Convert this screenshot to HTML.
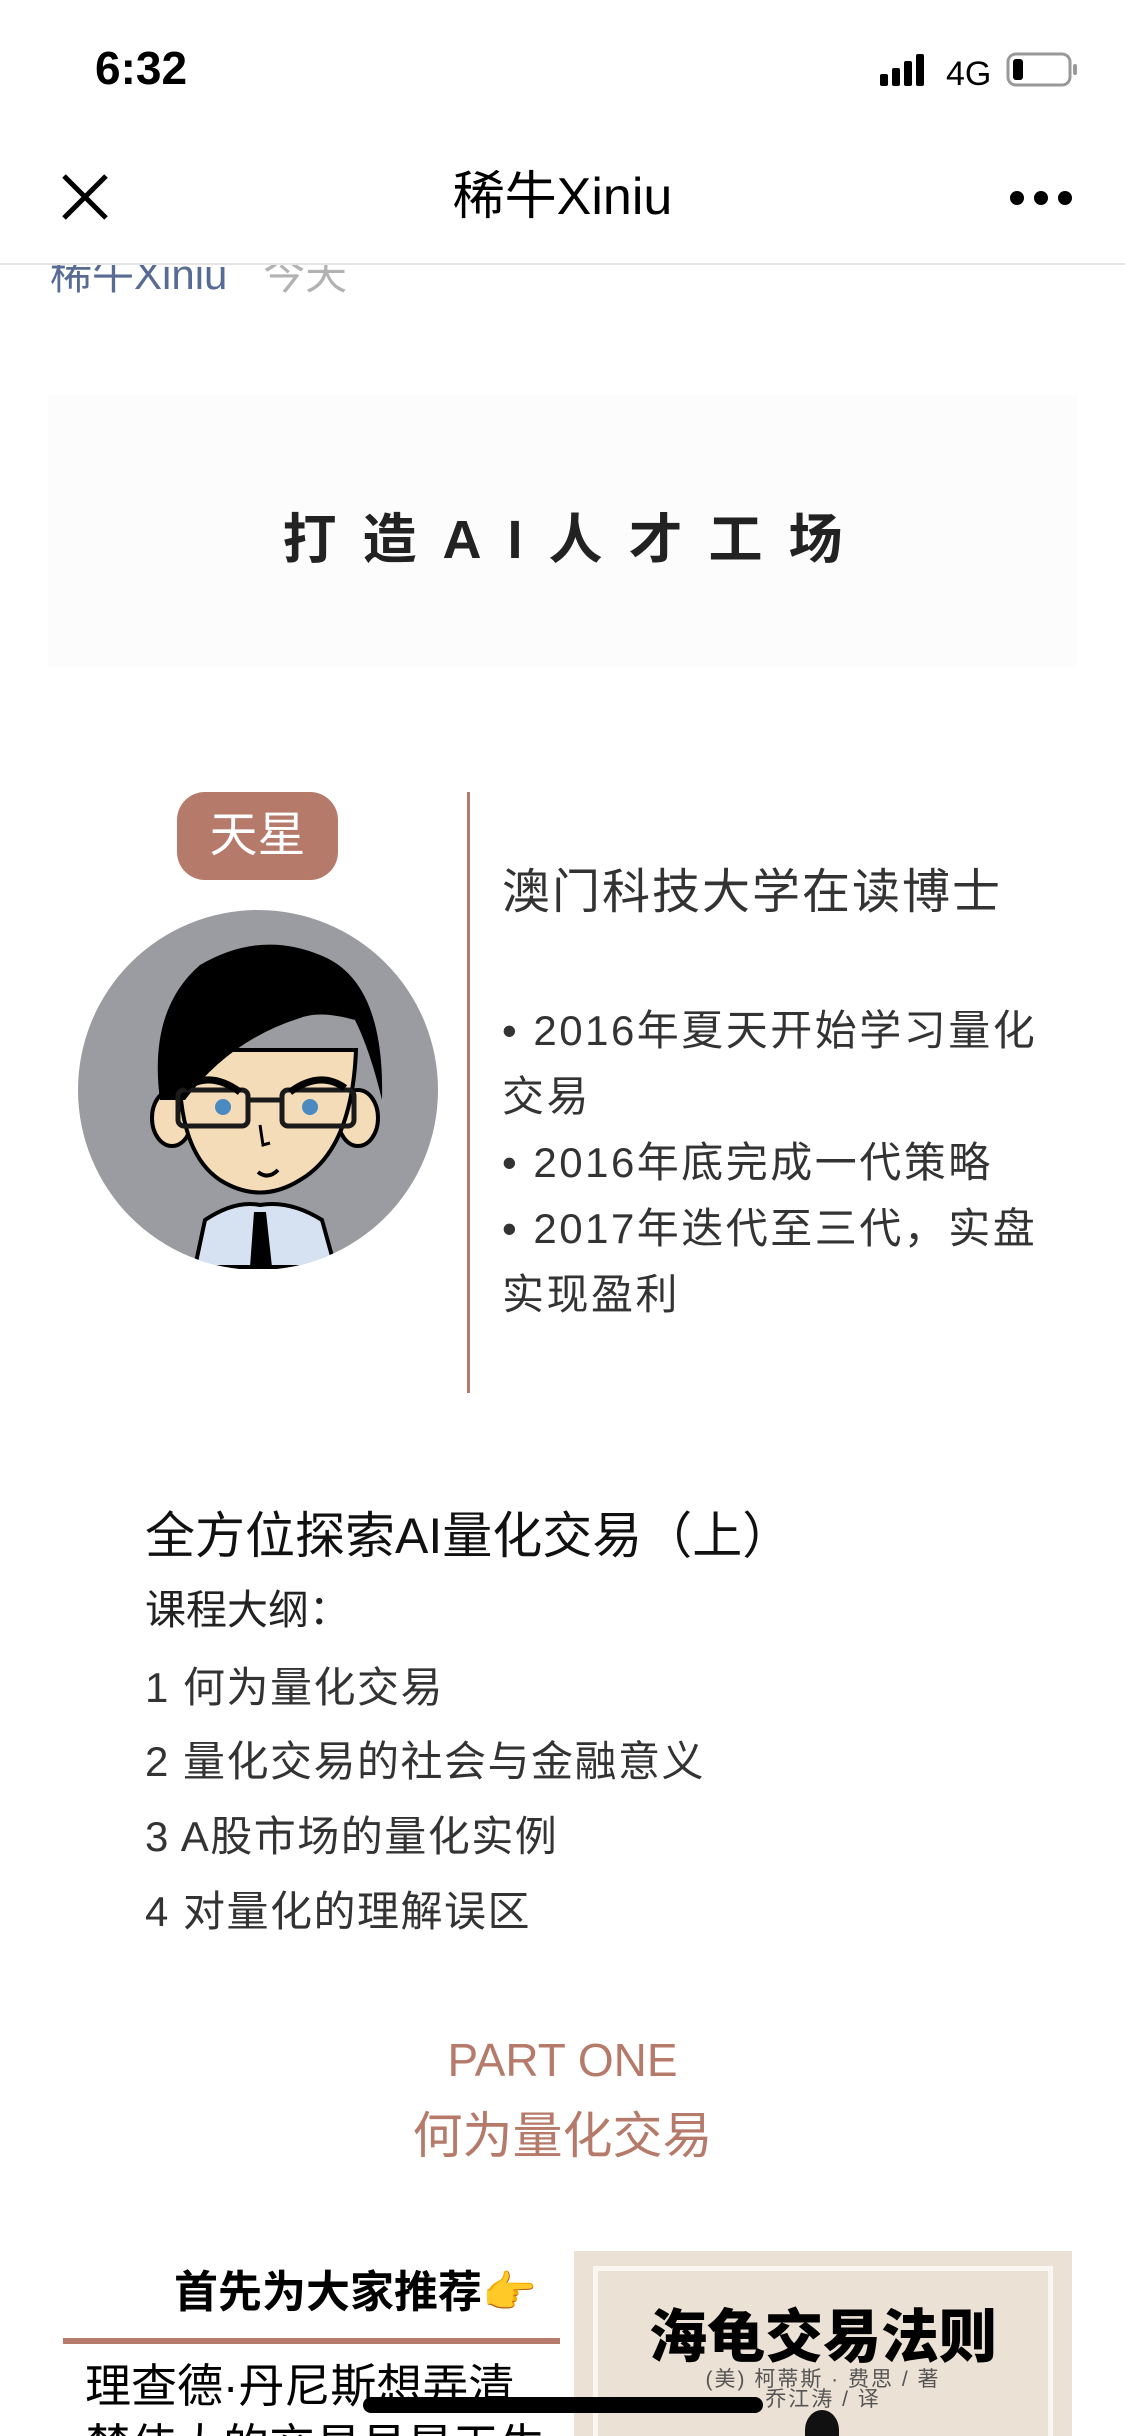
<!DOCTYPE html>
<html><head><meta charset="utf-8"><style>
*{margin:0;padding:0;box-sizing:border-box}
html,body{width:1125px;height:2436px;overflow:hidden;background:#fff}
#w{width:1125px;height:2436px;position:relative;overflow:hidden;font-family:"Liberation Sans","Noto Sans CJK SC",sans-serif;color:#333;background:#fff}
.a{position:absolute;white-space:nowrap}
</style></head><body><div id="w">
<div class="a" style="left:50px;top:250px;font-size:42px;line-height:50px;color:#576b95">稀牛Xiniu <span style="color:#b2b2b2;margin-left:24px">今天</span></div>
<div class="a" style="left:0;top:0;width:1125px;height:265px;background:#fff;border-bottom:2px solid #e5e5e5"></div>
<div class="a" style="left:95px;top:40px;font-size:46px;line-height:56px;font-weight:600;color:#000">6:32</div>
<svg class="a" style="left:880px;top:52px" width="200" height="36" viewBox="0 0 200 36">
<rect x="0" y="22" width="8" height="12" rx="2" fill="#000"/><rect x="12" y="16" width="8" height="18" rx="2" fill="#000"/><rect x="24" y="9" width="8" height="25" rx="2" fill="#000"/><rect x="36" y="2" width="8" height="32" rx="2" fill="#000"/>
<text x="66" y="33" font-size="34" font-family="Liberation Sans" fill="#000">4G</text>
<rect x="128" y="2" width="62" height="31" rx="8" fill="none" stroke="#999" stroke-width="3"/><rect x="133" y="7" width="10" height="21" rx="3" fill="#000"/><rect x="193" y="12" width="4" height="11" rx="2" fill="#999"/>
</svg>
<svg class="a" style="left:60px;top:172px" width="50" height="50" viewBox="0 0 50 50"><path d="M4 4L46 46M46 4L4 46" stroke="#000" stroke-width="5"/></svg>
<div class="a" style="left:0;width:1125px;top:165px;text-align:center;font-size:52px;line-height:64px;color:#000">稀牛Xiniu</div>
<svg class="a" style="left:1008px;top:188px" width="66" height="20"><circle cx="9" cy="10" r="7" fill="#000"/><circle cx="33" cy="10" r="7" fill="#000"/><circle cx="57" cy="10" r="7" fill="#000"/></svg>
<div class="a" style="left:48px;top:395px;width:1029px;height:272px;background:#fdfcfd"></div>
<div class="a" style="left:0;width:1125px;top:510px;text-align:center;font-size:54px;line-height:60px;font-weight:bold;color:#222;letter-spacing:26px;padding-left:26px">打造AI人才工场</div>
<div class="a" style="left:177px;top:792px;width:161px;height:88px;background:#b57a69;border-radius:28px;color:#fff;font-size:48px;line-height:88px;text-align:center">天星</div>
<svg class="a" style="left:60px;top:900px" width="400" height="380" viewBox="0 0 400 380">
<defs><clipPath id="c"><circle cx="198" cy="190" r="180"/></clipPath></defs>
<g clip-path="url(#c)">
<rect x="0" y="0" width="400" height="367" fill="#9b9ca1"/>
<path d="M135 367L145 320Q175 300 200 305Q230 300 262 320L275 367Z" fill="#d6e2f2" stroke="#000" stroke-width="4"/>
<path d="M194 312L206 312L212 367L190 367Z" fill="#000"/>
<ellipse cx="112" cy="218" rx="20" ry="28" fill="#f5dcb8" stroke="#000" stroke-width="4"/>
<ellipse cx="298" cy="218" rx="20" ry="28" fill="#f5dcb8" stroke="#000" stroke-width="4"/>
<path d="M120 150Q115 250 160 280Q200 305 240 280Q292 250 296 150Z" fill="#f5dcb8" stroke="#000" stroke-width="4"/>
<path d="M100 200Q88 110 140 65Q200 30 260 55Q325 80 322 200Q310 150 295 120Q260 110 240 118Q170 140 125 200Z" fill="#000"/>
<rect x="118" y="190" width="70" height="36" rx="6" fill="none" stroke="#1a1a1a" stroke-width="5"/>
<rect x="222" y="190" width="72" height="36" rx="6" fill="none" stroke="#1a1a1a" stroke-width="5"/>
<path d="M188 200L222 200" stroke="#1a1a1a" stroke-width="5"/>
<path d="M125 188Q150 170 180 192M230 192Q260 170 285 188" stroke="#000" stroke-width="7" fill="none"/>
<circle cx="163" cy="207" r="8" fill="#4a8ac0"/><circle cx="250" cy="207" r="8" fill="#4a8ac0"/>
<path d="M200 225L203 245L210 243" stroke="#000" stroke-width="3" fill="none"/>
<path d="M198 272Q208 280 218 270" stroke="#000" stroke-width="4" fill="none"/>
</g></svg>
<div class="a" style="left:467px;top:792px;width:3px;height:601px;background:#b57a69"></div>
<div class="a" style="left:502px;top:866px;font-size:48px;line-height:54px;letter-spacing:2px">澳门科技大学在读博士</div>
<div class="a" style="left:502px;top:998px;font-size:42px;line-height:66px;letter-spacing:2.5px">• 2016年夏天开始学习量化<br>交易<br>• 2016年底完成一代策略<br>• 2017年迭代至三代，实盘<br>实现盈利</div>
<div class="a" style="left:145px;top:1508px;font-size:50px;line-height:56px;color:#111">全方位探索AI量化交易（上）</div>
<div class="a" style="left:145px;top:1586px;font-size:41px;line-height:48px;color:#222">课程大纲：</div>
<div class="a" style="left:145px;top:1664px;font-size:42px;line-height:48px;letter-spacing:1.5px">1 何为量化交易</div>
<div class="a" style="left:145px;top:1738px;font-size:42px;line-height:48px;letter-spacing:1.5px">2 量化交易的社会与金融意义</div>
<div class="a" style="left:145px;top:1813px;font-size:42px;line-height:48px;letter-spacing:1.5px">3 A股市场的量化实例</div>
<div class="a" style="left:145px;top:1888px;font-size:42px;line-height:48px;letter-spacing:1.5px">4 对量化的理解误区</div>
<div class="a" style="left:0;width:1125px;text-align:center;top:2032px;font-size:46px;line-height:56px;color:#b57a69">PART ONE</div>
<div class="a" style="left:0;width:1125px;text-align:center;top:2106px;font-size:50px;line-height:60px;color:#b57a69">何为量化交易</div>
<div class="a" style="left:174px;top:2268px;font-size:44px;line-height:50px;font-weight:bold;color:#000">首先为大家推荐👉</div>
<div class="a" style="left:63px;top:2338px;width:497px;height:6px;background:#b57a69"></div>
<div class="a" style="left:85px;top:2358px;font-size:46px;line-height:56px;color:#000">理查德·丹尼斯想弄清</div>
<div class="a" style="left:85px;top:2418px;font-size:46px;line-height:56px;color:#000">楚伟大的交易员是天生</div>
<div class="a" style="left:574px;top:2251px;width:498px;height:200px;background:#ece1d5"></div>
<div class="a" style="left:593px;top:2266px;width:460px;height:200px;border:5px solid #faf7f3;border-bottom:none"></div>
<div class="a" style="left:574px;width:498px;text-align:center;top:2306px;font-size:58px;line-height:64px;font-weight:900;color:#000">海龟交易法则</div>
<div class="a" style="left:574px;width:498px;text-align:center;top:2368px;font-size:21px;line-height:24px;color:#555;letter-spacing:2px">(美) 柯蒂斯 · 费思 / 著</div>
<div class="a" style="left:574px;width:498px;text-align:center;top:2388px;font-size:21px;line-height:24px;color:#555;letter-spacing:2px">乔江涛 / 译</div>
<div class="a" style="left:805px;top:2410px;width:34px;height:40px;border-radius:50% 50% 20% 20%;background:#111"></div>
<div class="a" style="left:363px;top:2397px;width:400px;height:16px;border-radius:8px;background:#000"></div>
</div></body></html>
